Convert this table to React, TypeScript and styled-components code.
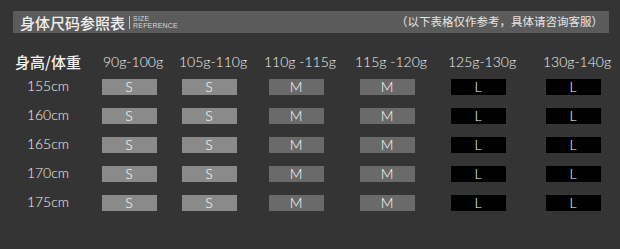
import React from 'react'
import styled, { createGlobalStyle } from 'styled-components'

const GlobalStyle = createGlobalStyle`
  html, body {
    margin: 0;
    padding: 0;
    background: #343434;
  }
`

type Size = 'S' | 'M' | 'L'

const weights = ['90g-100g', '105g-110g', '110g -115g', '115g -120g', '125g-130g', '130g-140g']
const heights = ['155cm', '160cm', '165cm', '170cm', '175cm']
const sizes: Size[] = ['S', 'S', 'M', 'M', 'L', 'L']

const boxColors: Record<Size, string> = {
    S: '#8a8a8a',
    M: '#6a6a6a',
    L: '#000000',
}

const SizeChart = () => {
    return (
        <SPage>
            <GlobalStyle/>
            <SBar>
                <STitle>身体尺码参照表</STitle>
                <SDivider/>
                <SSubTitle>
                    <span>SIZE</span>
                    <span>REFERENCE</span>
                </SSubTitle>
                <SNote>（以下表格仅作参考，具体请咨询客服）</SNote>
            </SBar>
            <STable>
                <SCorner>身高/体重</SCorner>
                {weights.map((w) => (
                    <SHead key={w}>{w}</SHead>
                ))}
                {heights.map((h) => (
                    <React.Fragment key={h}>
                        <SRowLabel>{h}</SRowLabel>
                        {sizes.map((s, i) => (
                            <SCell key={i}>
                                <SBox size={s}>{s}</SBox>
                            </SCell>
                        ))}
                    </React.Fragment>
                ))}
            </STable>
        </SPage>
    )
}

const SPage = styled.div`
  width: 620px;
  height: 249px;
  overflow: hidden;
  background: #343434;
  padding-top: 11px;
  box-sizing: border-box;
`

const SBar = styled.div`
  margin-left: 13px;
  width: 596px;
  height: 22px;
  background: #5b5b5b;
  display: flex;
  align-items: center;
  padding: 0 6px 0 7px;
  box-sizing: border-box;
`

const STitle = styled.div`
  font-family: "Noto Sans CJK SC", sans-serif;
  font-weight: 500;
  font-size: 15px;
  color: #f0f0f0;
  line-height: 1;
`

const SDivider = styled.div`
  width: 1px;
  height: 13px;
  background: #bdbdbd;
  margin: 0 3px 0 4px;
`

const SSubTitle = styled.div`
  display: flex;
  flex-direction: column;
  font-family: "Liberation Sans", sans-serif;
  font-size: 7px;
  line-height: 7px;
  color: #d8d8d8;
  letter-spacing: 0.2px;
`

const SNote = styled.div`
  margin-left: auto;
  font-family: "Noto Sans CJK SC", sans-serif;
  font-size: 11.5px;
  color: #e6e6e6;
  line-height: 1;
`

const STable = styled.div`
  display: grid;
  grid-template-columns: 90px 78px 82px 92px 90px 92px 98px;
  grid-template-rows: 22px repeat(5, 29px);
  margin-top: 17px;
  align-items: center;
  justify-items: center;
`

const SCorner = styled.div`
  font-family: "Noto Sans CJK SC", sans-serif;
  font-weight: 500;
  font-size: 15px;
  color: #f2f2f2;
  padding-left: 6px;
  white-space: nowrap;
`

const SHead = styled.div`
  font-family: "Lato", sans-serif;
  font-weight: 300;
  font-size: 14px;
  color: #f0f0f0;
  padding-left: 8px;
  white-space: nowrap;
`

const SRowLabel = styled.div`
  font-family: "Lato", sans-serif;
  font-weight: 300;
  font-size: 14px;
  color: #f2f2f2;
  padding-left: 6px;
  margin-top: -3px;
`

const SCell = styled.div`
  display: flex;
  justify-content: center;
`

const SBox = styled.div<{ size: Size }>`
  width: 55px;
  height: 16px;
  background: ${({ size }) => boxColors[size]};
  color: #ffffff;
  font-family: "Lato", sans-serif;
  font-weight: 300;
  font-size: 14px;
  line-height: 16px;
  text-align: center;
`

export default SizeChart
